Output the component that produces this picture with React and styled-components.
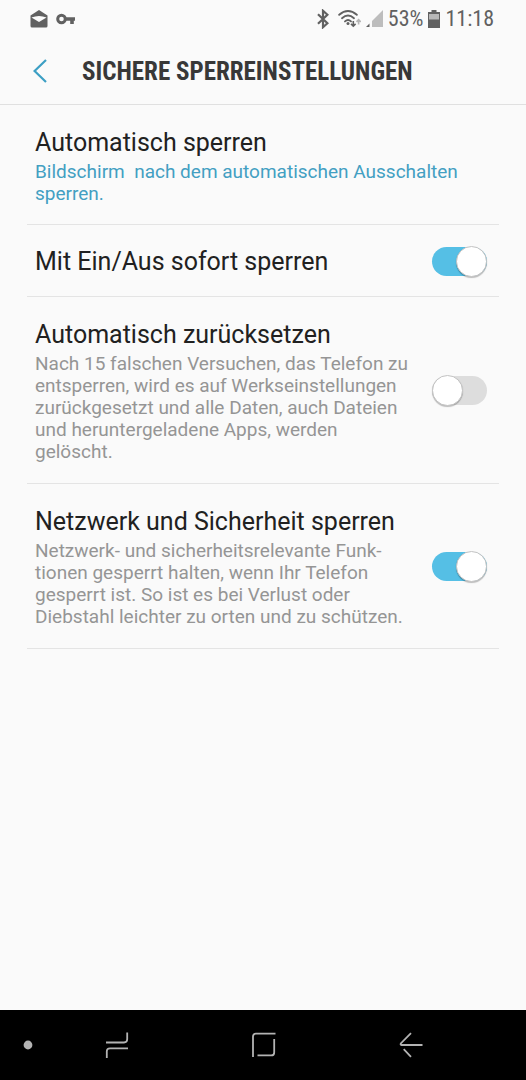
import React, { useState } from "react";
import styled, { createGlobalStyle } from "styled-components";

const settings = [
  {
    id: "power-lock",
    title: "Mit Ein/Aus sofort sperren",
    on: true,
  },
  {
    id: "auto-reset",
    title: "Automatisch zurücksetzen",
    text: "Nach 15 falschen Versuchen, das Telefon zu entsperren, wird es auf Werkseinstellungen zurückgesetzt und alle Daten, auch Dateien und heruntergeladene Apps, werden gelöscht.",
    on: false,
  },
  {
    id: "network-lock",
    title: "Netzwerk und Sicherheit sperren",
    text: "Netzwerk- und sicherheitsrelevante Funk\u00adtionen gesperrt halten, wenn Ihr Telefon gesperrt ist. So ist es bei Verlust oder Diebstahl leichter zu orten und zu schützen.",
    on: true,
  },
];

function StatusBar() {
  return (
    <StatusContainer>
      <StatusGroup>
        <svg width="18" height="18" viewBox="0 0 18 18">
          <path d="M9 0 17.5 5.5V16a1.5 1.5 0 0 1-1.5 1.5H2A1.5 1.5 0 0 1 .5 16V5.5z" fill="#616161" />
          <path d="M1.5 7.4Q9 4.4 16.5 7.4L9 12z" fill="#fafafa" />
        </svg>
        <svg width="20" height="12" viewBox="0 0 20 12">
          <circle cx="5.5" cy="6" r="3.8" fill="none" stroke="#616161" strokeWidth="3" />
          <path d="M9 4.3H19V7.8H17.8V11H14.2V7.8H9z" fill="#616161" />
        </svg>
      </StatusGroup>
      <StatusGroup $end>
        <svg width="12" height="20" viewBox="0 0 12 20">
          <path d="M1 5.2 10.4 14.2 6 18.2V1.8L10.4 5.8 1 14.8" fill="none" stroke="#616161" strokeWidth="2.2" />
        </svg>
        <WifiIcon width="23" height="20" viewBox="0 0 23 20">
          <g fill="none" stroke="#616161" strokeWidth="1.9" strokeLinecap="round">
            <path d="M1.2 5.8Q10-1.6 18.8 5.8" />
            <path d="M4 9.2Q10 3.8 16 9.2" />
            <path d="M7 12.4Q10 9.8 13 12.4" />
          </g>
          <circle cx="10" cy="14.6" r="1.5" fill="#616161" />
          <path d="M15.3 12v5M13 14.9 15.3 17.2l2.3-2.3" fill="none" stroke="#616161" strokeWidth="1.6" />
          <path d="M20.6 15.5v-5M18.5 12.9 20.6 10.6l2.1 2.3" fill="none" stroke="#b5b5b5" strokeWidth="1.6" />
        </WifiIcon>
        <svg width="17" height="18" viewBox="0 0 17 18">
          <path d="M17 0V17H6V11z" fill="#bdbdbd" />
          <path d="M3.5 13.5V17H0z" fill="#616161" />
        </svg>
        <StatusText>53%</StatusText>
        <svg width="12" height="18" viewBox="0 0 12 18">
          <path d="M3.5 0H8.5V2H12V18H0V2H3.5z" fill="#616161" />
          <path d="M1 4H11V9.5H1z" fill="#b8b8b8" />
        </svg>
        <StatusText>11:18</StatusText>
      </StatusGroup>
    </StatusContainer>
  );
}

function SwitchRow({ id, title, text, on }) {
  const [checked, setChecked] = useState(on);
  return (
    <Row $kind={text ? "detail" : "single"}>
      <RowLabel htmlFor={id}>
        <RowTitle>{title}</RowTitle>
        {text && <RowDescription>{text}</RowDescription>}
      </RowLabel>
      <Switch id={id} type="checkbox" role="switch" checked={checked} onChange={() => setChecked(!checked)} />
    </Row>
  );
}

function App() {
  return (
    <>
      <GlobalStyle />
      <Page>
        <StatusBar />
        <Header>
          <BackButton type="button" aria-label="Zurück">
            <svg width="14" height="24" viewBox="0 0 14 24">
              <path d="M13 1 1.6 12 13 23" fill="none" stroke="#3c9fc4" strokeWidth="2.2" />
            </svg>
          </BackButton>
          <h1>SICHERE SPERREINSTELLUNGEN</h1>
        </Header>
        <List>
          <Row>
            <RowButton type="button">
              <RowTitle>Automatisch sperren</RowTitle>
              <RowDescription $accent>
                {"Bildschirm\u00a0 nach dem automatischen Ausschalten sperren."}
              </RowDescription>
            </RowButton>
          </Row>
          {settings.map((item) => (
            <SwitchRow key={item.id} {...item} />
          ))}
        </List>
        <NavBar>
          <NavButton type="button" aria-label="Leiste ausblenden">
            <svg width="10" height="10" viewBox="0 0 10 10">
              <circle cx="5" cy="5" r="4.4" fill="#b3b3b3" />
            </svg>
          </NavButton>
          <NavButton type="button" aria-label="Letzte Apps">
            <svg width="24" height="28" viewBox="0 0 24 28">
              <path d="M1 11.5H19Q22.2 11.5 22.2 8.3V1.5M23 17.3H5Q1.8 17.3 1.8 20.5V27" />
            </svg>
          </NavButton>
          <NavButton type="button" aria-label="Startseite">
            <svg width="26" height="26" viewBox="0 0 26 26">
              <path d="M2 25V4.5Q2 1.6 5 1.6H24.5M23.2 7V20.4Q23.2 23.4 20.2 23.4H6.5" />
            </svg>
          </NavButton>
          <NavButton type="button" aria-label="Zurück">
            <svg width="24" height="26" viewBox="0 0 24 26">
              <path d="M12 1.2 2 11.2Q1 13 2.5 13H23.5M4.7 17.2 12 24.8" />
            </svg>
          </NavButton>
        </NavBar>
      </Page>
    </>
  );
}

export default App;

const rowPadding = {
  single: "19px 12px 18px 8px",
  detail: "20px 12px 20px 8px",
};

const GlobalStyle = createGlobalStyle`
  *,
  *::before {
    box-sizing: border-box;
  }
  body {
    margin: 0;
    background-color: #fafafa;
    color: #212121;
    font-family: Roboto, "Liberation Sans", sans-serif;
  }
  button {
    padding: 0;
    border: none;
    background: none;
    color: inherit;
    font: inherit;
    cursor: pointer;
  }
  svg {
    display: block;
    flex-shrink: 0;
  }
`;

const Page = styled.div`
  display: flex;
  flex-direction: column;
  min-height: 100vh;
`;

const StatusContainer = styled.div`
  display: flex;
  align-items: center;
  justify-content: space-between;
  height: 37px;
  padding: 0 32px 0 30px;
`;

const StatusGroup = styled.div`
  display: flex;
  align-items: center;
  gap: ${(props) => (props.$end ? "5px" : "8px")};
`;

const WifiIcon = styled.svg`
  margin-left: 4px;
`;

const StatusText = styled.span`
  color: #616161;
  font-family: "Roboto Condensed", "Liberation Sans Narrow", Roboto, sans-serif;
  font-size: 22px;
  line-height: 28px;
`;

const Header = styled.header`
  display: flex;
  align-items: center;
  gap: 35px;
  height: 68px;
  padding: 0 33px;
  border-bottom: 1px solid #e0e0e0;
  h1 {
    margin: 0;
    padding-top: 2px;
    color: #383838;
    font-family: "Roboto Condensed", "Liberation Sans Narrow", Roboto, sans-serif;
    font-size: 25px;
    font-weight: 700;
    line-height: 32px;
    white-space: nowrap;
  }
`;

const BackButton = styled.button`
  display: flex;
`;

const List = styled.main`
  flex: 1;
  margin: 0 27px;
`;

const Row = styled.div`
  display: flex;
  align-items: center;
  justify-content: space-between;
  gap: 20px;
  padding: ${(props) => rowPadding[props.$kind] || "20px 12px 19px 8px"};
  border-bottom: 1px solid #e4e4e4;
`;

const RowLabel = styled.label`
  display: flex;
  flex: 1;
  flex-direction: column;
  gap: 2px;
  padding-top: 2px;
  cursor: pointer;
`;

const RowButton = styled.button`
  display: flex;
  flex: 1;
  flex-direction: column;
  gap: 2px;
  && {
    padding-top: 2px;
  }
  text-align: left;
`;

const RowTitle = styled.span`
  font-size: 25px;
  line-height: 32px;
`;

const RowDescription = styled.span`
  color: ${(props) => (props.$accent ? "#439fc2" : "#959595")};
  font-size: 19px;
  line-height: 22px;
`;

const Switch = styled.input`
  display: flex;
  align-items: center;
  flex-shrink: 0;
  width: 55px;
  height: 29px;
  margin: 0;
  appearance: none;
  border-radius: 15px;
  background-color: #dddddd;
  cursor: pointer;
  &::before {
    content: "";
    flex-shrink: 0;
    width: 31px;
    height: 31px;
    border: 1px solid #c4c4c4;
    border-radius: 50%;
    background-color: #ffffff;
    box-shadow: 0 1px 1px rgba(0, 0, 0, 0.25);
  }
  &:checked {
    background-color: #55bfe5;
  }
  &:checked::before {
    margin-left: auto;
  }
`;

const NavBar = styled.nav`
  display: grid;
  grid-template-columns: 56fr 122fr 171fr 124fr 53fr;
  align-items: center;
  height: 70px;
  background-color: #000000;
`;

const NavButton = styled.button`
  display: flex;
  justify-content: center;
  path {
    fill: none;
    stroke: #b3b3b3;
    stroke-width: 1.8;
  }
`;
